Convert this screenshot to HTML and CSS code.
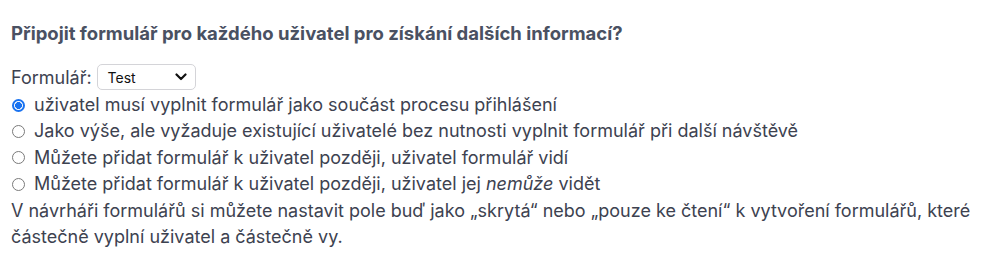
FILE: index.html
```html
<!DOCTYPE html>
<html lang="cs">
<head>
<meta charset="utf-8">
<link rel="stylesheet" href="styles.css">
</head>
<body>
<div class="panel">
  <h3 class="title">Připojit formulář pro každého uživatel pro získání dalších informací?</h3>
  <div class="form-row">
    <label class="form-label" for="f">Formulář:</label>
    <span class="select">
      <span class="select-value">Test</span>
      <svg class="chev" width="12" height="8" viewBox="0 0 12 8"><path d="M1.5 1.5 L6 6 L10.5 1.5" fill="none" stroke="#111" stroke-width="2.2" stroke-linecap="round" stroke-linejoin="round"/></svg>
    </span>
  </div>
  <label class="opt"><span class="radio checked"></span><span>uživatel musí vyplnit formulář jako součást procesu přihlášení</span></label>
  <label class="opt"><span class="radio"></span><span>Jako výše, ale vyžaduje existující uživatelé bez nutnosti vyplnit formulář při další návštěvě</span></label>
  <label class="opt"><span class="radio"></span><span>Můžete přidat formulář k uživatel později, uživatel formulář vidí</span></label>
  <label class="opt"><span class="radio"></span><span>Můžete přidat formulář k uživatel později, uživatel jej <em>nemůže</em> vidět</span></label>
  <p class="note">V návrháři formulářů si můžete nastavit pole buď jako „skrytá“ nebo „pouze ke čtení“ k vytvoření formulářů, které částečně vyplní uživatel a částečně vy.</p>
</div>
</body>
</html>
```
FILE: styles.css
```css
html, body {
  margin: 0;
  padding: 0;
  background: #ffffff;
}
body {
  font-family: Inter, "Liberation Sans", Arial, sans-serif;
  font-size: 18px;
  color: #3d4250;
}
.panel {
  padding: 22px 11px 0 11px;
  width: 984px;
  box-sizing: border-box;
}
.title {
  margin: 0 0 20px 0;
  font-size: 18.5px;
  font-weight: 700;
  line-height: 22px;
  color: #4a5162;
}
.form-row {
  display: flex;
  align-items: center;
  gap: 5px;
  height: 26px;
  margin-bottom: 2px;
}
.select {
  display: inline-flex;
  align-items: center;
  justify-content: space-between;
  width: 99px;
  height: 26px;
  box-sizing: border-box;
  border: 1px solid #d4d4d8;
  border-radius: 5px;
  padding: 0 8px 0 10px;
  font-size: 14px;
  color: #111;
  background: #fff;
}
.chev { display: block; }
.opt {
  display: flex;
  align-items: center;
  height: 26.4px;
  line-height: 26.4px;
  white-space: nowrap;
}
.radio {
  width: 13px;
  height: 13px;
  box-sizing: border-box;
  border: 1px solid #7a7a7a;
  border-radius: 50%;
  margin: 0 9px 0 1px;
  flex: none;
}
.radio.checked {
  border: 2px solid #1a73f0;
  background: radial-gradient(circle, #1a73f0 0 3.2px, #fff 3.7px);
}
.note {
  margin: 0;
  line-height: 26.4px;
}
```
